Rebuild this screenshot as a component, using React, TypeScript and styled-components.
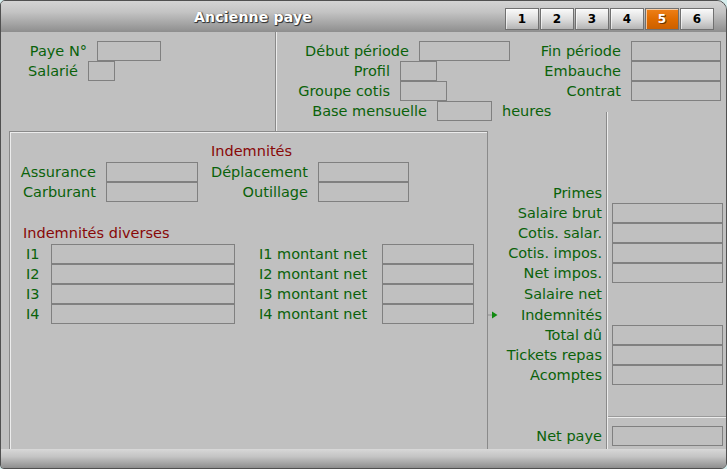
import styled, { createGlobalStyle } from "styled-components";

const GREEN = "#0a620a";
const RED = "#880808";
const LABEL_SIZE = "14.5px";
const SUMMARY_ROWS = "52px repeat(5, 20px) 21px 21px repeat(3, 20px) 1fr 2px 31px";

const GlobalStyle = createGlobalStyle`
  html, body {
    margin: 0;
    padding: 0;
    background: #d6eeee;
  }
  body {
    width: 727px;
    height: 469px;
    overflow: hidden;
    font-family: "DejaVu Sans", Verdana, sans-serif;
  }
`;

const tabs = ["1", "2", "3", "4", "5", "6"];

const summary = [
  { label: "Primes", field: false },
  { label: "Salaire brut", field: true },
  { label: "Cotis. salar.", field: true },
  { label: "Cotis. impos.", field: true },
  { label: "Net impos.", field: true },
  { label: "Salaire net", field: false },
  { label: "Indemnités", field: false, arrow: true },
  { label: "Total dû", field: true },
  { label: "Tickets repas", field: true },
  { label: "Acomptes", field: true },
];

const diverses = ["I1", "I2", "I3", "I4"];

const App = () => {
  return (
    <>
      <GlobalStyle />
      <Window>
        <TitleBar>
          <Title>Ancienne paye</Title>
          <Tabs>
            {tabs.map((t) => (
              <Tab key={t} $active={t === "5"}>
                {t}
              </Tab>
            ))}
          </Tabs>
        </TitleBar>

        <Content>
          <TopRegion>
            <LeftFields>
              <FieldRow>
                <Label $width={86}>Paye N°</Label>
                <Box $width={64} readOnly aria-label="Paye N°" />
              </FieldRow>
              <FieldRow>
                <Label $width={77}>Salarié</Label>
                <Box $width={27} readOnly aria-label="Salarié" />
              </FieldRow>
            </LeftFields>
            <VDivider />
            <RightFields>
              <FieldRow>
                <Label $width={132}>Début période</Label>
                <Box $width={91} readOnly aria-label="Début période" />
              </FieldRow>
              <FieldRow>
                <Label $width={99}>Fin période</Label>
                <Box $width={90} readOnly aria-label="Fin période" />
              </FieldRow>
              <FieldRow>
                <Label $width={113}>Profil</Label>
                <Box $width={37} readOnly aria-label="Profil" />
              </FieldRow>
              <FieldRow>
                <Label $width={99}>Embauche</Label>
                <Box $width={90} readOnly aria-label="Embauche" />
              </FieldRow>
              <FieldRow>
                <Label $width={113}>Groupe cotis</Label>
                <Box $width={47} readOnly aria-label="Groupe cotis" />
              </FieldRow>
              <FieldRow>
                <Label $width={99}>Contrat</Label>
                <Box $width={90} readOnly aria-label="Contrat" />
              </FieldRow>
              <FieldRow>
                <Label $width={150}>Base mensuelle</Label>
                <Box $width={55} readOnly aria-label="Base mensuelle" />
                <Label>heures</Label>
              </FieldRow>
            </RightFields>
          </TopRegion>

          <BottomRegion>
            <Panel>
              <IndemGrid>
                <Heading $col={3} $indent={3}>
                  Indemnités
                </Heading>
                <Label $align="right">Assurance</Label>
                <Box readOnly aria-label="Assurance" />
                <Label $align="right">Déplacement</Label>
                <Box readOnly aria-label="Déplacement" />
                <Label $align="right">Carburant</Label>
                <Box readOnly aria-label="Carburant" />
                <Label $align="right">Outillage</Label>
                <Box readOnly aria-label="Outillage" />
              </IndemGrid>

              <DiversBlock>
                <Heading $indent={13}>Indemnités diverses</Heading>
                {diverses.map((d) => (
                  <DiversRow key={d}>
                    <Label $width={25} $align="left">
                      {d}
                    </Label>
                    <Box $width={184} readOnly aria-label={d} />
                    <NetLabel>{d} montant net</NetLabel>
                    <Box $width={92} readOnly aria-label={`${d} montant net`} />
                  </DiversRow>
                ))}
              </DiversBlock>
            </Panel>

            <SummaryLabels>
              <span />
              {summary.map((s) => (
                <SummaryLabel key={s.label}>
                  {s.arrow && (
                    <Arrow width="10" height="8" viewBox="0 0 10 8">
                      <line x1="0" y1="4" x2="4" y2="4" stroke="#909090" />
                      <polygon points="4,0.5 9.5,4 4,7.5" fill="#108a10" />
                    </Arrow>
                  )}
                  {s.label}
                </SummaryLabel>
              ))}
              <span />
              <span />
              <SummaryLabel $bottom>Net paye</SummaryLabel>
            </SummaryLabels>

            <SummaryValues>
              <span />
              {summary.map((s) => (
                <ValueCell key={s.label}>
                  {s.field && <Box $width={111} readOnly aria-label={s.label} />}
                </ValueCell>
              ))}
              <span />
              <HLine />
              <ValueCell $bottom>
                <Box $width={111} readOnly aria-label="Net paye" />
              </ValueCell>
            </SummaryValues>
          </BottomRegion>
        </Content>

        <BottomBar />
      </Window>
    </>
  );
};

const Window = styled.div`
  width: 727px;
  height: 469px;
  box-sizing: border-box;
  border: 1px solid #505050;
  border-radius: 5px 10px 6px 4px;
  overflow: hidden;
  background: #c0c0c0;
  display: flex;
  flex-direction: column;
`;

const TitleBar = styled.header`
  height: 31px;
  flex: none;
  display: flex;
  align-items: flex-start;
  padding-right: 12px;
  background: linear-gradient(to bottom, #d4d4d4 0%, #c4c4c4 35%, #8e8e8e 100%);
`;

const Title = styled.h1`
  flex: 1;
  margin: 0;
  font: bold 14px "DejaVu Sans", Verdana, sans-serif;
  line-height: 33px;
  letter-spacing: 0.2px;
  text-align: center;
  color: #ffffff;
  text-shadow: 1px 1px 0 #383838, 1px 0 1px #505050, 0 1px 1px #505050;
`;

const Tabs = styled.nav`
  display: flex;
  gap: 1px;
  margin-top: 7px;
`;

const Tab = styled.button<{ $active?: boolean }>`
  width: 34px;
  height: 22px;
  padding: 0;
  box-sizing: border-box;
  border: 1px solid #707070;
  font: bold 12px "DejaVu Sans", Verdana, sans-serif;
  color: ${(p) => (p.$active ? "#ffffff" : "#000000")};
  text-shadow: ${(p) => (p.$active ? "1px 1px 0 #6a3000" : "none")};
  background: ${(p) =>
    p.$active
      ? "linear-gradient(to bottom, #ee8018 0%, #e06c00 50%, #cc6000 100%)"
      : "linear-gradient(to bottom, #fafafa 0%, #dedede 50%, #b4b4b4 100%)"};
  box-shadow: inset 1px 1px 0 rgba(255, 255, 255, 0.6);
  cursor: pointer;
`;

const Content = styled.main`
  flex: 1;
  display: grid;
  grid-template-rows: 99px 1fr;
  min-height: 0;
`;

const TopRegion = styled.section`
  display: grid;
  grid-template-columns: 274px 2px 1fr;
`;

const VDivider = styled.div`
  background: linear-gradient(to right, #8a8a8a 50%, #ececec 50%);
`;

const LeftFields = styled.div`
  padding-top: 9px;
  display: flex;
  flex-direction: column;
`;

const RightFields = styled.div`
  padding-top: 9px;
  display: grid;
  grid-template-columns: 245px 1fr;
  grid-auto-rows: 20px;
  align-content: start;
`;

const FieldRow = styled.div`
  height: 20px;
  display: flex;
  align-items: center;
  gap: 10px;
`;

const Label = styled.span<{ $width?: number; $align?: "left" | "right" }>`
  ${(p) => (p.$width ? `width: ${p.$width}px;` : "")}
  flex: none;
  text-align: ${(p) => p.$align ?? "right"};
  font-size: ${LABEL_SIZE};
  line-height: 20px;
  color: ${GREEN};
  white-space: nowrap;
`;

const Box = styled.input<{ $width?: number }>`
  ${(p) => (p.$width ? `width: ${p.$width}px;` : "width: 100%;")}
  height: 20px;
  flex: none;
  box-sizing: border-box;
  margin: 0;
  padding: 0;
  border: 1px solid #808080;
  background: transparent;
  outline: none;
  font: inherit;
`;

const BottomRegion = styled.section`
  display: grid;
  grid-template-columns: 479px 118px 1fr;
  padding-left: 8px;
  min-height: 0;
`;

const Panel = styled.div`
  border: 1px solid #8a8a8a;
  border-bottom: none;
  box-shadow: inset 1px 1px 0 #ececec;
  padding-top: 8px;
`;

const IndemGrid = styled.div`
  display: grid;
  grid-template-columns: 86px 92px 100px 91px;
  grid-template-rows: 22px 20px 20px;
  column-gap: 10px;
  align-items: center;
`;

const Heading = styled.div<{ $col?: number; $indent?: number }>`
  ${(p) => (p.$col ? `grid-column: ${p.$col} / span 2;` : "")}
  padding-left: ${(p) => p.$indent ?? 0}px;
  height: 21px;
  line-height: 21px;
  font-size: ${LABEL_SIZE};
  color: ${RED};
  white-space: nowrap;
`;

const DiversBlock = styled.div`
  margin-top: 21px;
  display: flex;
  flex-direction: column;
`;

const DiversRow = styled.div`
  height: 20px;
  display: flex;
  align-items: center;
  padding-left: 16px;
`;

const NetLabel = styled.span`
  width: 123px;
  margin-left: 24px;
  flex: none;
  font-size: ${LABEL_SIZE};
  line-height: 20px;
  color: ${GREEN};
  white-space: nowrap;
`;

const SummaryLabels = styled.div`
  display: grid;
  grid-template-rows: ${SUMMARY_ROWS};
`;

const SummaryLabel = styled.div<{ $bottom?: boolean }>`
  display: flex;
  align-items: ${(p) => (p.$bottom ? "flex-end" : "center")};
  justify-content: flex-end;
  padding-right: 4px;
  padding-bottom: ${(p) => (p.$bottom ? "4px" : "0")};
  font-size: ${LABEL_SIZE};
  line-height: 18px;
  color: ${GREEN};
  white-space: nowrap;
`;

const Arrow = styled.svg`
  margin-right: auto;
  flex: none;
`;

const SummaryValues = styled.div`
  position: relative;
  display: grid;
  grid-template-rows: ${SUMMARY_ROWS};
  border-left: 1px solid #8a8a8a;
  box-shadow: inset 1px 0 0 #ececec;

  &::before {
    content: "";
    position: absolute;
    left: -1px;
    top: -19px;
    width: 2px;
    height: 19px;
    background: linear-gradient(to right, #8a8a8a 50%, #ececec 50%);
  }
`;

const ValueCell = styled.div<{ $bottom?: boolean }>`
  display: flex;
  align-items: ${(p) => (p.$bottom ? "flex-end" : "center")};
  padding-left: 5px;
  padding-bottom: ${(p) => (p.$bottom ? "3px" : "0")};
`;

const HLine = styled.div`
  margin-left: 1px;
  background: linear-gradient(to bottom, #9a9a9a 50%, #ececec 50%);
`;

const BottomBar = styled.footer`
  height: 19px;
  flex: none;
  background: linear-gradient(to bottom, #d8d8d8 0%, #c4c4c4 40%, #8e8e8e 100%);
`;

export default App;
